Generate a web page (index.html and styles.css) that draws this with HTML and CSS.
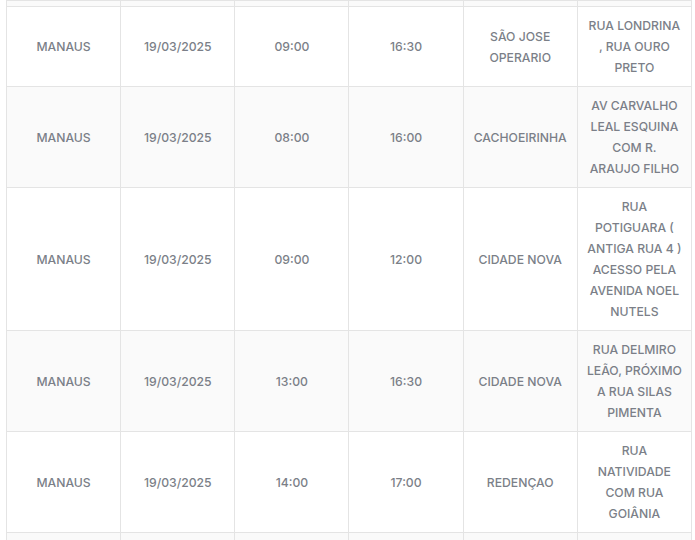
FILE: index.html
```html
<!DOCTYPE html>
<html lang="pt-BR">
<head>
<meta charset="utf-8">
<link rel="stylesheet" href="styles.css">
</head>
<body>
<table class="agenda">
<tbody>
<tr class="stub alt"><td></td><td></td><td></td><td></td><td></td><td></td></tr>
<tr><td>MANAUS</td><td>19/03/2025</td><td>09:00</td><td>16:30</td><td>SÃO JOSE OPERARIO</td><td>RUA LONDRINA , RUA OURO PRETO</td></tr>
<tr class="alt"><td>MANAUS</td><td>19/03/2025</td><td>08:00</td><td>16:00</td><td>CACHOEIRINHA</td><td>AV CARVALHO LEAL ESQUINA COM R. ARAUJO FILHO</td></tr>
<tr><td>MANAUS</td><td>19/03/2025</td><td>09:00</td><td>12:00</td><td>CIDADE NOVA</td><td>RUA POTIGUARA ( ANTIGA RUA 4 ) ACESSO PELA AVENIDA NOEL NUTELS</td></tr>
<tr class="alt"><td>MANAUS</td><td>19/03/2025</td><td>13:00</td><td>16:30</td><td>CIDADE NOVA</td><td>RUA DELMIRO LEÃO, PRÓXIMO A RUA SILAS PIMENTA</td></tr>
<tr><td>MANAUS</td><td>19/03/2025</td><td>14:00</td><td>17:00</td><td>REDENÇAO</td><td>RUA NATIVIDADE COM RUA GOIÂNIA</td></tr>
<tr class="stub tail alt"><td></td><td></td><td></td><td></td><td></td><td></td></tr>
</tbody>
</table>
</body>
</html>
```
FILE: styles.css
```css
html, body {
  margin: 0;
  padding: 0;
  background: #fff;
  overflow: hidden;
}
body {
  padding-left: 6px;
  font-family: "Inter", "Open Sans", sans-serif;
}
.agenda {
  width: 686px;
  table-layout: fixed;
  border-collapse: collapse;
  color: #7b7f88;
  font-size: 12.2px;
  font-weight: 500;
  line-height: 21px;
}
.agenda td {
  border: 1px solid #e4e4e4;
  text-align: center;
  vertical-align: middle;
  padding: 8px 9px;
}
.agenda tr.alt td {
  background: #fafafa;
}
.agenda tr.stub td {
  padding: 0;
  height: 5px;
}
.agenda tr.tail td {
  height: 30px;
}
```
